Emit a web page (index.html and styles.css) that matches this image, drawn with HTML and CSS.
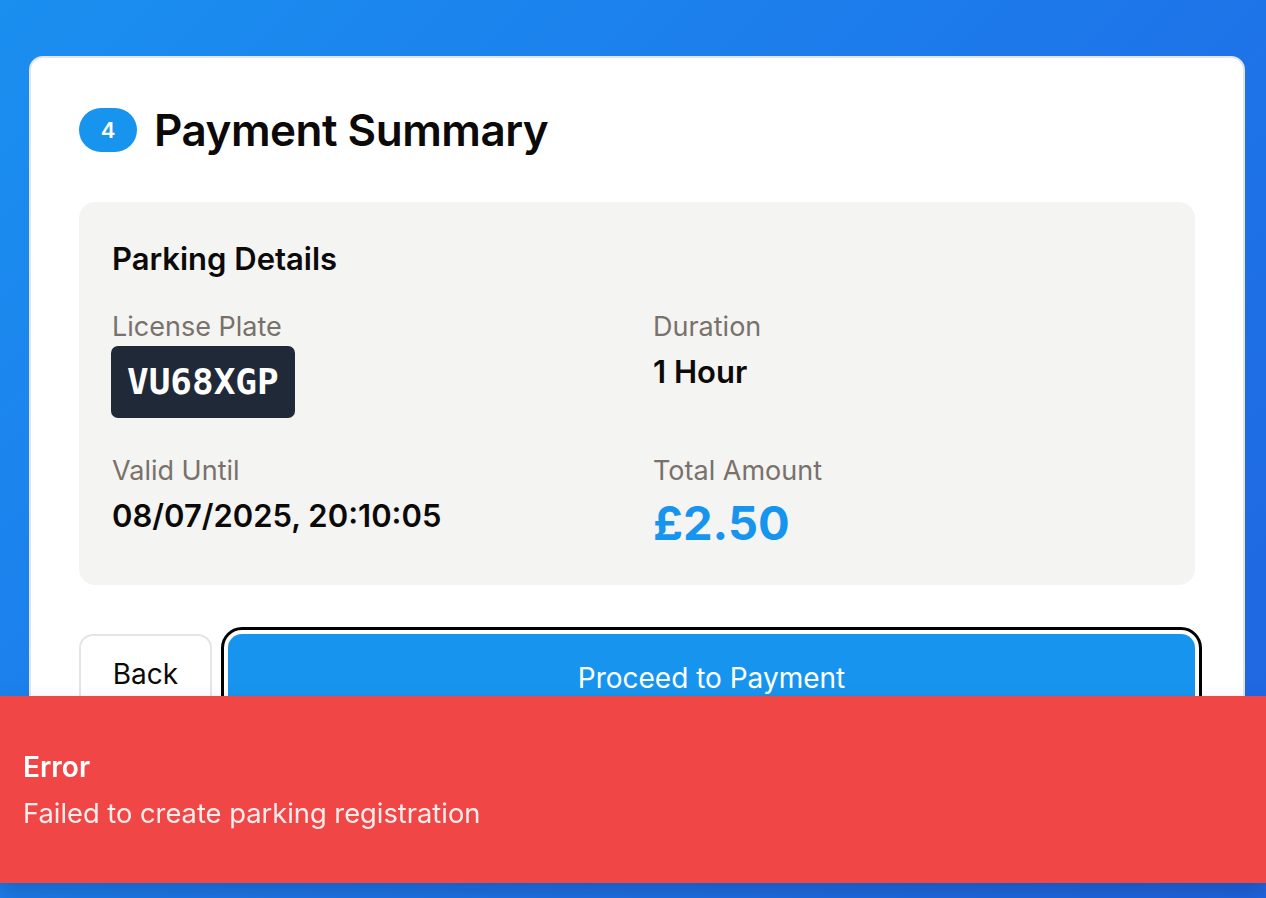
FILE: index.html
```html
<!DOCTYPE html>
<html lang="en">
<head>
<meta charset="utf-8">
<title>Payment Summary</title>
<link rel="stylesheet" href="styles.css">
</head>
<body>
<main class="page">
  <section class="card">
    <header class="card-head">
      <span class="step">4</span>
      <h1 class="title">Payment Summary</h1>
    </header>
    <div class="details">
      <h2 class="details-title">Parking Details</h2>
      <div class="grid">
        <div class="field">
          <div class="label">License Plate</div>
          <div class="plate">VU68XGP</div>
        </div>
        <div class="field">
          <div class="label">Duration</div>
          <div class="value">1 Hour</div>
        </div>
        <div class="field">
          <div class="label">Valid Until</div>
          <div class="value">08/07/2025, 20:10:05</div>
        </div>
        <div class="field">
          <div class="label">Total Amount</div>
          <div class="amount">£2.50</div>
        </div>
      </div>
    </div>
    <div class="actions">
      <button class="btn btn-back">Back</button>
      <button class="btn btn-pay">Proceed to Payment</button>
    </div>
  </section>
</main>
<div class="toast" role="alert">
  <div class="toast-title">Error</div>
  <div class="toast-msg">Failed to create parking registration</div>
</div>
</body>
</html>
```

FILE: styles.css
```css
* { box-sizing: border-box; }
html, body { margin: 0; height: 100%; }
body {
  font-family: Inter, "Noto Sans", "Liberation Sans", sans-serif;
  background: linear-gradient(135deg, #1a8ff0 0%, #1d78ea 50%, #2064e0 100%);
  overflow: hidden;
  color: #0c0a09;
}
.page {
  padding: 56px 21px 0 29px;
}
.card {
  background: #fff;
  border: 2px solid #e5e5e5;
  border-radius: 14px;
  padding: 44px 48px 48px 48px;
  height: 820px;
  overflow: hidden;
}
.card-head {
  display: flex;
  align-items: center;
  gap: 17px;
  margin-bottom: 44px;
}
.step {
  width: 58px;
  height: 44px;
  border-radius: 22px;
  background: #1795ee;
  color: #fff;
  font-size: 22px;
  font-weight: 600;
  display: flex;
  align-items: center;
  justify-content: center;
}
.title {
  margin: 0;
  font-size: 44px;
  font-weight: 600;
  letter-spacing: -0.5px;
  line-height: 56px;
}
.details {
  background: #f4f4f2;
  border-radius: 16px;
  padding: 37px 33px 35px;
}
.details-title {
  margin: 0 0 31px;
  font-size: 31px;
  font-weight: 600;
  line-height: 40px;
}
.grid {
  display: grid;
  grid-template-columns: 1fr 1fr;
  column-gap: 32px;
  row-gap: 36px;
}
.label {
  font-size: 27px;
  line-height: 34px;
  color: #78716c;
}
.plate {
  display: inline-block;
  margin-top: 2px;
  margin-left: -1px;
  background: #1f2937;
  color: #fff;
  border-radius: 7px;
  padding: 0 16px;
  height: 72px;
  line-height: 72px;
  font-family: "DejaVu Sans Mono", "Liberation Mono", monospace;
  font-weight: 700;
  font-size: 36px;
}
.value {
  margin-top: 8px;
  font-size: 31px;
  font-weight: 600;
  line-height: 40px;
}
.amount {
  margin-top: 8px;
  font-size: 47px;
  font-weight: 700;
  line-height: 54px;
  color: #1795ee;
}
.actions {
  display: flex;
  align-items: flex-start;
  gap: 16px;
  margin-top: 49px;
}
.btn {
  font-family: inherit;
  font-size: 28px;
  border-radius: 14px;
  cursor: pointer;
  display: flex;
  align-items: center;
  justify-content: center;
  padding: 0;
}
.btn-back {
  width: 133px;
  height: 80px;
  background: #fff;
  border: 2px solid #e5e5e5;
  color: #0c0a09;
}
.btn-pay {
  flex: 1;
  height: 88px;
  background: #1795ee;
  border: none;
  color: #fff;
  outline: 3px solid #000;
  outline-offset: 4px;
}
.toast {
  position: fixed;
  left: 0;
  right: 0;
  top: 696px;
  height: 187px;
  background: #f04646;
  color: #fff;
  padding: 53px 23px;
  box-shadow: 0 10px 20px rgba(0,0,0,0.18);
}
.toast-title {
  font-size: 28px;
  font-weight: 600;
  line-height: 36px;
  margin-bottom: 12px;
}
.toast-msg {
  font-size: 27.3px;
  line-height: 34px;
  color: rgba(255,255,255,0.9);
}
```
